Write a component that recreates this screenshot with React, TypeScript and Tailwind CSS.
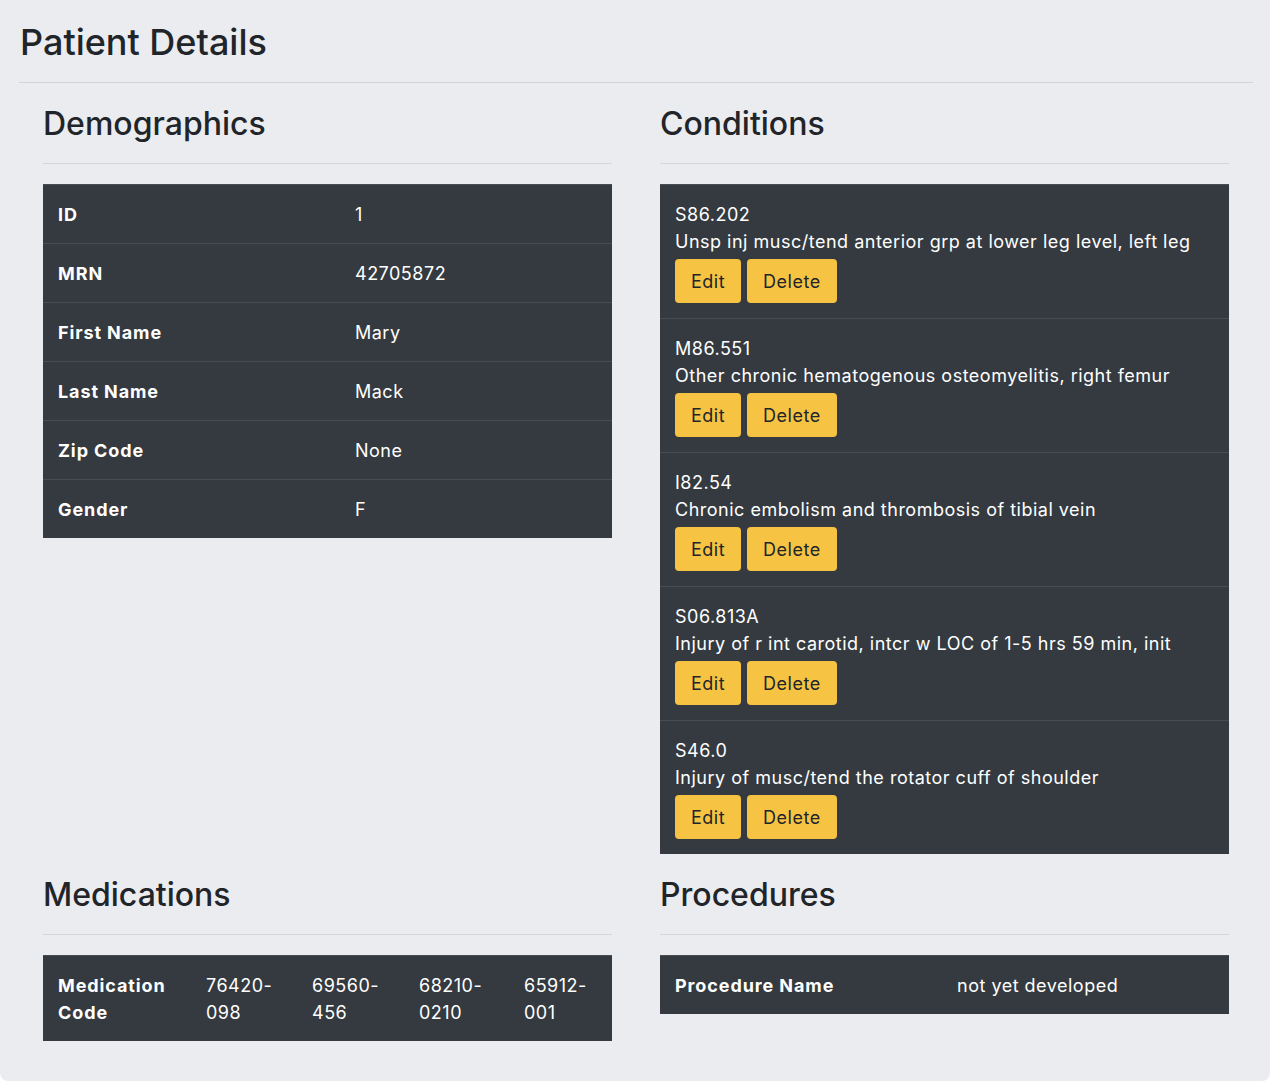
import React from 'react';

const demographics = [
  { label: 'ID', value: '1' },
  { label: 'MRN', value: '42705872' },
  { label: 'First Name', value: 'Mary' },
  { label: 'Last Name', value: 'Mack' },
  { label: 'Zip Code', value: 'None' },
  { label: 'Gender', value: 'F' },
];

const conditions = [
  { code: 'S86.202', name: 'Unsp inj musc/tend anterior grp at lower leg level, left leg' },
  { code: 'M86.551', name: 'Other chronic hematogenous osteomyelitis, right femur' },
  { code: 'I82.54', name: 'Chronic embolism and thrombosis of tibial vein' },
  { code: 'S06.813A', name: 'Injury of r int carotid, intcr w LOC of 1-5 hrs 59 min, init' },
  { code: 'S46.0', name: 'Injury of musc/tend the rotator cuff of shoulder' },
];

const medications = ['76420-098', '69560-456', '68210-0210', '65912-001'];

const Section = ({ title, children }: { title: string; children: React.ReactNode }) => (
  <div className="pt-[22px]">
    <h2 className="text-[32px] font-medium leading-[38px] text-[#212529]">{title}</h2>
    <hr className="mt-[20px] mb-[20px] border-t border-[#d5d6da]" />
    {children}
  </div>
);

const App = () => {
  return (
    <div className="min-h-screen bg-white" style={{ fontFamily: 'Inter, "Noto Sans", sans-serif' }}>
      <div className="w-[1270px] h-[1081px] bg-[#ebecf0] rounded-b-lg pl-[19px] pr-[17px] pt-[19px]">
        <h1 className="text-[36px] font-medium leading-[46px] text-[#212529] pl-px">Patient Details</h1>
        <hr className="mt-[17px] border-t border-[#d3d4d8]" />

        <div className="grid grid-cols-2 gap-x-[48px] px-[24px]">
          {/* Demographics */}
          <Section title="Demographics">
            <div className="bg-[#343a40] text-white text-[18px] leading-[27px] tracking-[0.5px]">
              {demographics.map((row) => (
                <div key={row.label} className="grid grid-cols-[297px_1fr] border-t border-[#454d55]">
                  <div className="px-[15px] py-[15.5px] font-bold tracking-[0.9px]">{row.label}</div>
                  <div className="px-[15px] py-[15.5px]">{row.value}</div>
                </div>
              ))}
            </div>
          </Section>

          {/* Conditions */}
          <Section title="Conditions">
            <div className="bg-[#343a40] text-white text-[18px] leading-[27px] tracking-[0.5px]">
              {conditions.map((c) => (
                <div key={c.code} className="border-t border-[#454d55] px-[15px] pt-[16px] pb-[15px]">
                  <div>{c.code}</div>
                  <div>{c.name}</div>
                  <div className="mt-[4px] flex gap-[6px]">
                    <button className="h-[44px] px-4 rounded-[4px] bg-[#f6c343] text-[#212529]">Edit</button>
                    <button className="h-[44px] px-4 rounded-[4px] bg-[#f6c343] text-[#212529]">Delete</button>
                  </div>
                </div>
              ))}
            </div>
          </Section>

          {/* Medications */}
          <Section title="Medications">
            <div className="bg-[#343a40] text-white text-[18px] leading-[27px] tracking-[0.5px]">
              <div className="grid grid-cols-[148px_106px_107px_105px_1fr] border-t border-[#454d55]">
                <div className="px-[15px] py-[15.5px] font-bold tracking-[0.9px]">Medication Code</div>
                {medications.map((m) => (
                  <div key={m} className="px-[15px] py-[15.5px]">{m}</div>
                ))}
              </div>
            </div>
          </Section>

          {/* Procedures */}
          <Section title="Procedures">
            <div className="bg-[#343a40] text-white text-[18px] leading-[27px] tracking-[0.5px]">
              <div className="grid grid-cols-[282px_1fr] border-t border-[#454d55]">
                <div className="px-[15px] py-[15.5px] font-bold tracking-[0.9px]">Procedure Name</div>
                <div className="px-[15px] py-[15.5px]">not yet developed</div>
              </div>
            </div>
          </Section>
        </div>
      </div>
    </div>
  );
};

export default App;
